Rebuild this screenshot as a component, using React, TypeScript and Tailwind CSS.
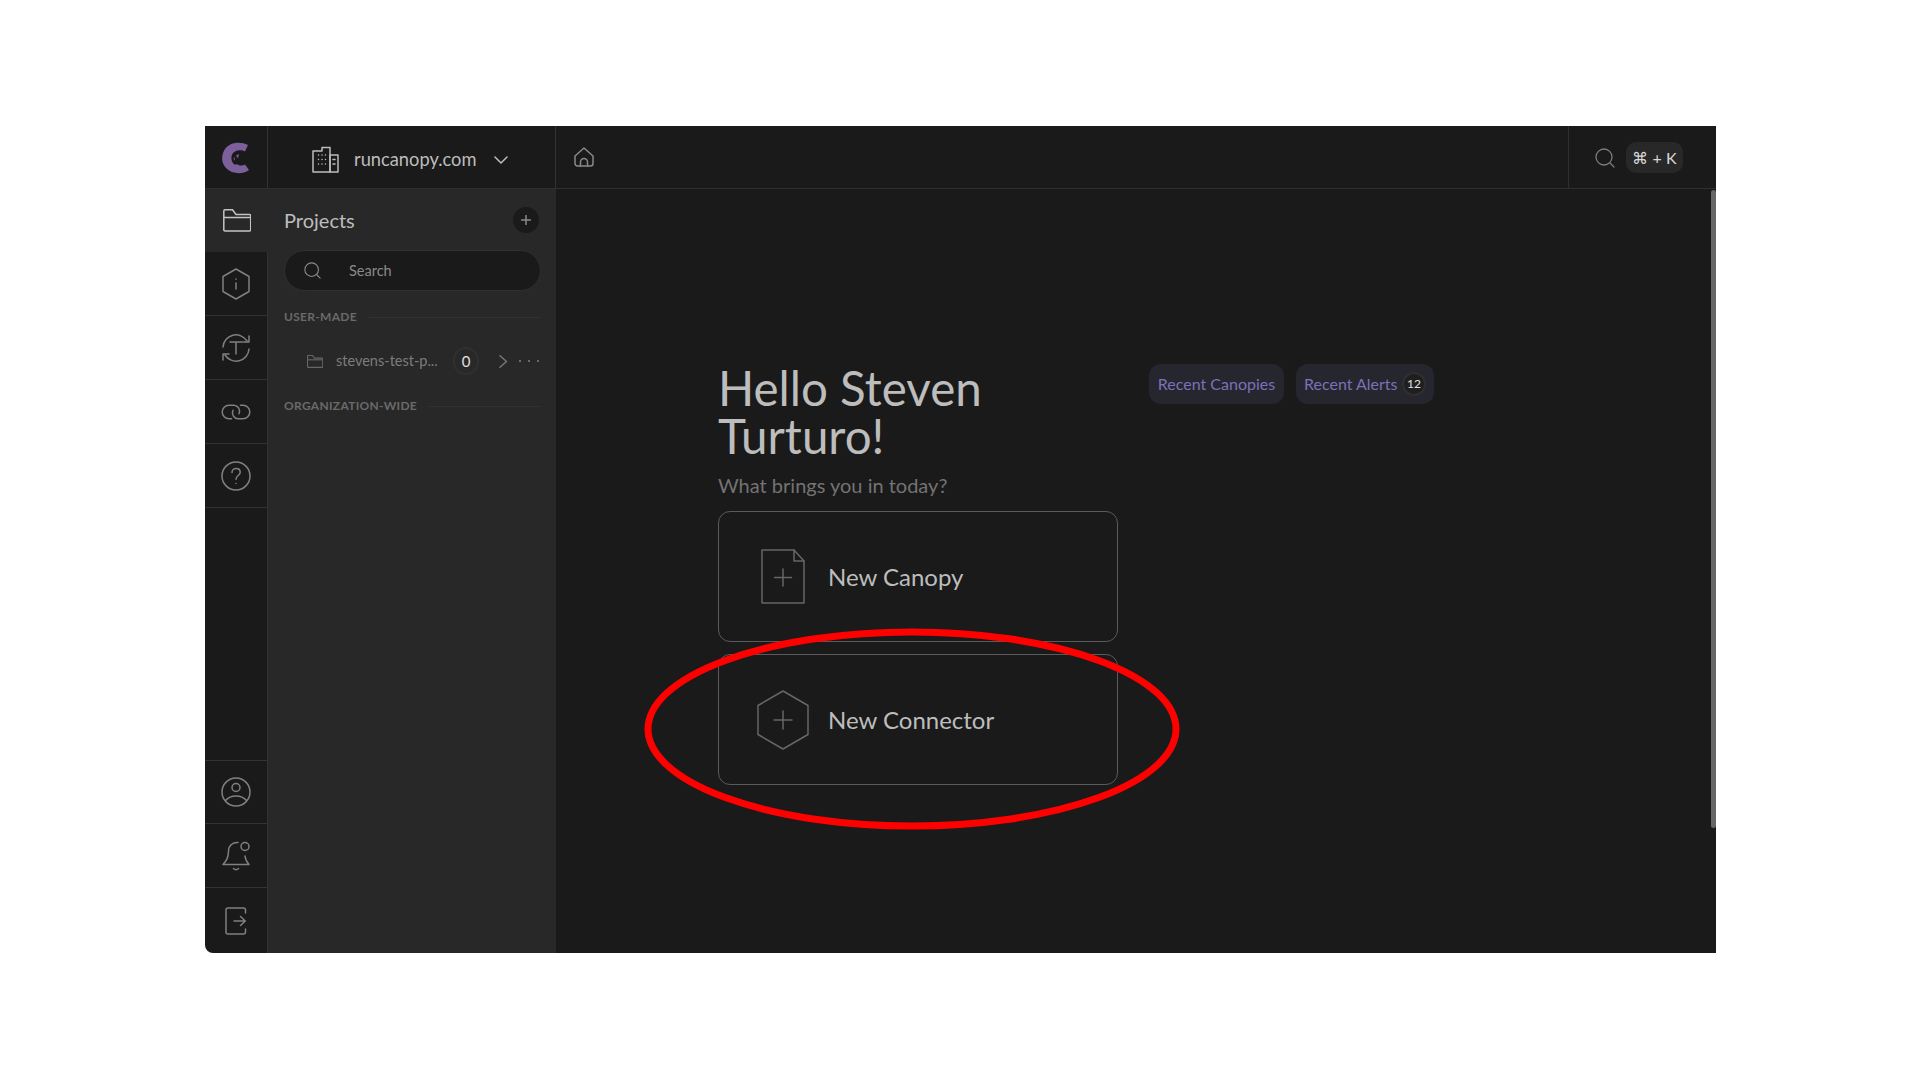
import { ReactNode } from 'react';

const Icon = ({ w, h, children, className }: { w: number; h: number; children: ReactNode; className?: string }) => (
  <svg
    width={w}
    height={h}
    viewBox={`0 0 ${w} ${h}`}
    fill="none"
    stroke="currentColor"
    strokeWidth="1.5"
    strokeLinecap="round"
    strokeLinejoin="round"
    className={className}
  >
    {children}
  </svg>
);

const Logo = () => (
  <svg width="28" height="32" viewBox="0 0 28 32">
    <path
      fill="#7d5f9c"
      d="M26 3C18-1 8 0 3 7-1 13-1 21 4 26 10 32 20 33 27 28L23 22.500C20 24.500 17 23.500 15 22 13 24 10 21 9.500 17 9 12 12 9 16 8.500 19 8 21 8.500 23 9.500Z"
    />
    <path fill="#7d5f9c" d="M14 13.500L17 12 16 16.500ZM11.500 16L13 15.500 12.500 19Z" />
  </svg>
);

const FolderIcon = ({ w, h }: { w: number; h: number }) => (
  <svg width={w} height={h} viewBox="0 0 28 23" fill="none" stroke="currentColor" strokeWidth={w > 20 ? 1.5 : 2}>
    <path d="M.8 20.500V2a1.200 1.200 0 0 1 1.200-1.200h7.500l3.500 4.700h13.500a1.200 1.200 0 0 1 1.200 1.200v14a1.200 1.200 0 0 1-1.200 1.200H2a1.200 1.200 0 0 1-1.200-1.400Z" />
    <path d="M.8 8.500h26.400" />
  </svg>
);

const SearchIcon = ({ size }: { size: number }) => (
  <svg width={size} height={size} viewBox="0 0 20 20" fill="none" stroke="currentColor" strokeWidth="1.300" strokeLinecap="round">
    <circle cx="9" cy="9" r="8" />
    <path d="M15 15l4 4" />
  </svg>
);

const railTop: { h: string; active?: boolean; icon: ReactNode }[] = [
  {
    h: 'h-[63px]',
    active: true,
    icon: <FolderIcon w={28} h={23} />,
  },
  {
    h: 'h-[64px]',
    icon: (
      <Icon w={28} h={32}>
        <path d="M14 1l13 7.500v15L14 31 1 23.500v-15Z" />
        <path d="M14 15v6M14 11v.2" />
      </Icon>
    ),
  },
  {
    h: 'h-[64px]',
    icon: (
      <Icon w={30} h={30}>
        <path d="M2 14A13 13 0 0 1 26 8" />
        <path d="M28 3v6h-6" />
        <path d="M28 16A13 13 0 0 1 4 22" />
        <path d="M2 27v-6h6" />
        <path d="M9 9h12M15 9v12" />
      </Icon>
    ),
  },
  {
    h: 'h-[64px]',
    icon: (
      <Icon w={30} h={16}>
        <path d="M10.500 14.800H8A6.800 6.800 0 0 1 8 1.200h5a6 6 0 0 1 5 8.500" />
        <path d="M19.500 1.200H22A6.800 6.800 0 0 1 22 14.800h-5a6 6 0 0 1-5-8.500" />
      </Icon>
    ),
  },
  {
    h: 'h-[64px]',
    icon: (
      <Icon w={30} h={30}>
        <circle cx="15" cy="15" r="14" />
        <path d="M11 11.500c0-2.500 2-4 4.200-4 2.400 0 4 1.600 4 3.700 0 3.300-4.200 3.300-4.200 7" />
        <path d="M15 22.500v.1" />
      </Icon>
    ),
  },
];

const railBottom: { h: string; icon: ReactNode }[] = [
  {
    h: 'h-[63px]',
    icon: (
      <Icon w={30} h={30}>
        <circle cx="15" cy="15" r="14" />
        <circle cx="15" cy="10.500" r="4" />
        <path d="M4.500 23.500C7 20.500 10.500 19 15 19s8 1.500 10.500 4.500" />
      </Icon>
    ),
  },
  {
    h: 'h-[64px]',
    icon: (
      <Icon w={28} h={30}>
        <path d="M16 1.500c-5 -.5-9.500 3-9.500 8.500 0 7-2.500 10-5.500 13.500h26c-2-2-3.500-4.500-4-8.500" />
        <circle cx="23" cy="5.500" r="4" />
        <path d="M11.500 27.500c1.500 1.400 3.500 1.400 5 0" />
      </Icon>
    ),
  },
  {
    h: 'h-[66px]',
    icon: (
      <Icon w={22} h={28}>
        <path d="M20.500 6V3a2 2 0 0 0-2-2H3a2 2 0 0 0-2 2v22a2 2 0 0 0 2 2h15.500a2 2 0 0 0 2-2v-3" />
        <path d="M9 14h11M15.500 9.500l4.800 4.500-4.800 4.500" />
      </Icon>
    ),
  },
];

const SectionLabel = ({ text }: { text: string }) => (
  <div className="flex items-center gap-3">
    <span className="text-[12px] font-bold tracking-[0.3px] text-[#6a6a6a] leading-none">{text}</span>
    <div className="flex-1 h-px bg-[#323232]" />
  </div>
);

const ActionCard = ({ icon, text }: { icon: ReactNode; text: string }) => (
  <button className="flex items-center w-[400px] h-[131px] rounded-xl border border-[#5a5a5a] text-left">
    <div className="flex justify-center w-[52px] ml-[38px] mr-[19px] shrink-0 text-[#666666]">{icon}</div>
    <span className="text-[24px] text-[#bdbdbd]">{text}</span>
  </button>
);

const App = () => {
  return (
    <div className="min-h-screen bg-white pt-[126px] pl-[205px] font-['Lato','Liberation_Sans',sans-serif]">
      <div className="relative flex flex-col w-[1511px] h-[827px] bg-[#1a1a1a] rounded-bl-lg overflow-hidden">
        {/* top bar */}
        <div className="flex h-[63px] shrink-0 border-b border-[#2e2e2e]">
          <div className="flex items-center justify-center w-[63px] pt-[2px] border-r border-[#333333]">
            <Logo />
          </div>
          <div className="flex items-center w-[288px] pl-[44px] pt-[5px] border-r border-[#333333] text-[#bdbdbd]">
            <Icon w={27} h={27} className="mr-[15px]">
              <path d="M1 26V5h9V1.500h8V26Z" />
              <path d="M18 9h8v17h-8Z" />
              <path d="M6.500 9v.1M10 9v.1M13.500 9v.1M6.500 13.500v.1M10 13.500v.1M13.500 13.500v.1M6.500 18v.1M10 18v.1M13.500 18v.1M21 13.500h2M21 18h2" />
            </Icon>
            <span className="text-[18.300px]">runcanopy.com</span>
            <Icon w={14} h={8} className="ml-[17px]">
              <path d="M1 1l6 6 6-6" />
            </Icon>
          </div>
          <div className="flex items-center flex-1 pl-[18px] text-[#8a8a8a]">
            <Icon w={20} h={20}>
              <path d="M1 9l9-8 9 8v7.500a2.500 2.500 0 0 1-2.500 2.500h-13A2.500 2.500 0 0 1 1 16.500Z" />
              <path d="M6.500 19v-4a3.500 3.500 0 0 1 7 0v4" />
            </Icon>
          </div>
          <div className="flex items-center w-[148px] pl-[26px] pt-[1px] border-l border-[#2e2e2e]">
            <span className="text-[#7c7c7c]">
              <SearchIcon size={20} />
            </span>
            <div className="flex items-center justify-center ml-[11px] w-[57px] h-[31px] rounded-[10px] bg-[#282828] text-[16px] text-[#d8d8d8]">
              ⌘ + K
            </div>
          </div>
        </div>

        <div className="flex flex-1 min-h-0">
          {/* icon rail */}
          <div className="flex flex-col justify-between w-[63px] shrink-0 border-r border-[#333333]">
            <div>
              {railTop.map((item, i) => (
                <div
                  key={i}
                  className={`flex items-center justify-center border-b border-[#333333] ${item.h} ${
                    item.active ? 'bg-[#282828] text-[#c4c4c4] border-b-0 -mr-px' : 'text-[#808080]'
                  }`}
                >
                  {item.icon}
                </div>
              ))}
            </div>
            <div>
              {railBottom.map((item, i) => (
                <div key={i} className={`flex items-center justify-center border-t border-[#333333] text-[#808080] ${item.h}`}>
                  {item.icon}
                </div>
              ))}
            </div>
          </div>

          {/* projects panel */}
          <div className="flex flex-col w-[288px] shrink-0 bg-[#282828] pl-[16px] pr-[15px]">
            <div className="flex items-center justify-between h-[61px]">
              <span className="text-[20px] text-[#bdbdbd]">Projects</span>
              <div className="flex items-center justify-center w-[26px] h-[26px] mr-[2px] rounded-full bg-[#1a1a1a] text-[#8a8a8a]">
                <Icon w={10} h={10}>
                  <path d="M5 .5v9M.5 5h9" />
                </Icon>
              </div>
            </div>
            <div className="flex items-center h-[41px] rounded-full bg-[#1a1a1a] border border-[#303030] pl-[19px] text-[#8a8a8a]">
              <SearchIcon size={17} />
              <span className="ml-[28px] text-[14.500px] text-[#8a8a8a]">Search</span>
            </div>
            <div className="mt-[20px]">
              <SectionLabel text="USER-MADE" />
            </div>
            <div className="flex items-center h-[28px] mt-[24px] pl-[23px]">
              <span className="text-[#666666]">
                <FolderIcon w={16} h={13} />
              </span>
              <span className="ml-[13px] w-[106px] text-[14.500px] text-[#7c7c7c]">stevens-test-p...</span>
              <div className="flex items-center justify-center ml-[11px] w-[26px] h-[28px] rounded-full border-2 border-[#303030] text-[15px] text-[#e0e0e0]">
                0
              </div>
              <Icon w={9} h={13} className="ml-[20px] text-[#777777]">
                <path d="M1 .8L7.500 6.500 1 12.200" />
              </Icon>
              <span className="ml-[11px] flex gap-[7px]">
                <span className="w-[2px] h-[2px] rounded-full bg-[#808080]" />
                <span className="w-[2px] h-[2px] rounded-full bg-[#808080]" />
                <span className="w-[2px] h-[2px] rounded-full bg-[#808080]" />
              </span>
            </div>
            <div className="mt-[25px]">
              <SectionLabel text="ORGANIZATION-WIDE" />
            </div>
          </div>

          {/* main */}
          <div className="relative flex flex-1 gap-[31px] pl-[162px] pt-[175px]">
            <div className="flex flex-col w-[400px]">
              <h1 className="text-[47.500px] leading-[48px] text-[#bdbdbd] w-[300px]">Hello Steven Turturo!</h1>
              <p className="mt-[11px] text-[20px] leading-[28px] text-[#737373]">What brings you in today?</p>
              <div className="flex flex-col gap-3 mt-[12px]">
                <ActionCard
                  text="New Canopy"
                  icon={
                    <Icon w={44} h={55}>
                      <path d="M1 1h32l10 11v42H1Z" />
                      <path d="M33 1v11h10" />
                      <path d="M22 20v17M13.500 28.500h17" />
                    </Icon>
                  }
                />
                <ActionCard
                  text="New Connector"
                  icon={
                    <Icon w={52} h={60}>
                      <path d="M26 1l25 14.500v29L26 59 1 44.500v-29Z" />
                      <path d="M26 21v18M17 30h18" />
                    </Icon>
                  }
                />
              </div>
            </div>
            <div className="flex gap-3 h-[40px]">
              <button className="h-[40px] w-[135px] rounded-xl bg-[#26262f] text-[16px] text-[#7a72b8]">Recent Canopies</button>
              <button className="flex items-center justify-between h-[40px] w-[138px] pl-2 pr-2 rounded-xl bg-[#26262f] text-[16px] text-[#7a72b8]">
                Recent Alerts
                <span className="flex items-center justify-center w-[24px] h-[24px] rounded-full border-2 border-[#2f2f2f] bg-[#1f1f1f] text-[12px] text-[#e0e0e0]">
                  12
                </span>
              </button>
            </div>
            {/* scrollbar */}
            <div className="absolute top-px right-0 w-[5px] h-[638px] rounded-full bg-[#666666]" />
          </div>
        </div>

        {/* red annotation */}
        <svg width="536" height="202" viewBox="0 0 536 202" fill="none" className="absolute left-[439px] top-[502px]">
          <ellipse cx="268" cy="101" rx="264" ry="97" stroke="#ff0000" strokeWidth="7" />
        </svg>
      </div>
    </div>
  );
};

export default App;
